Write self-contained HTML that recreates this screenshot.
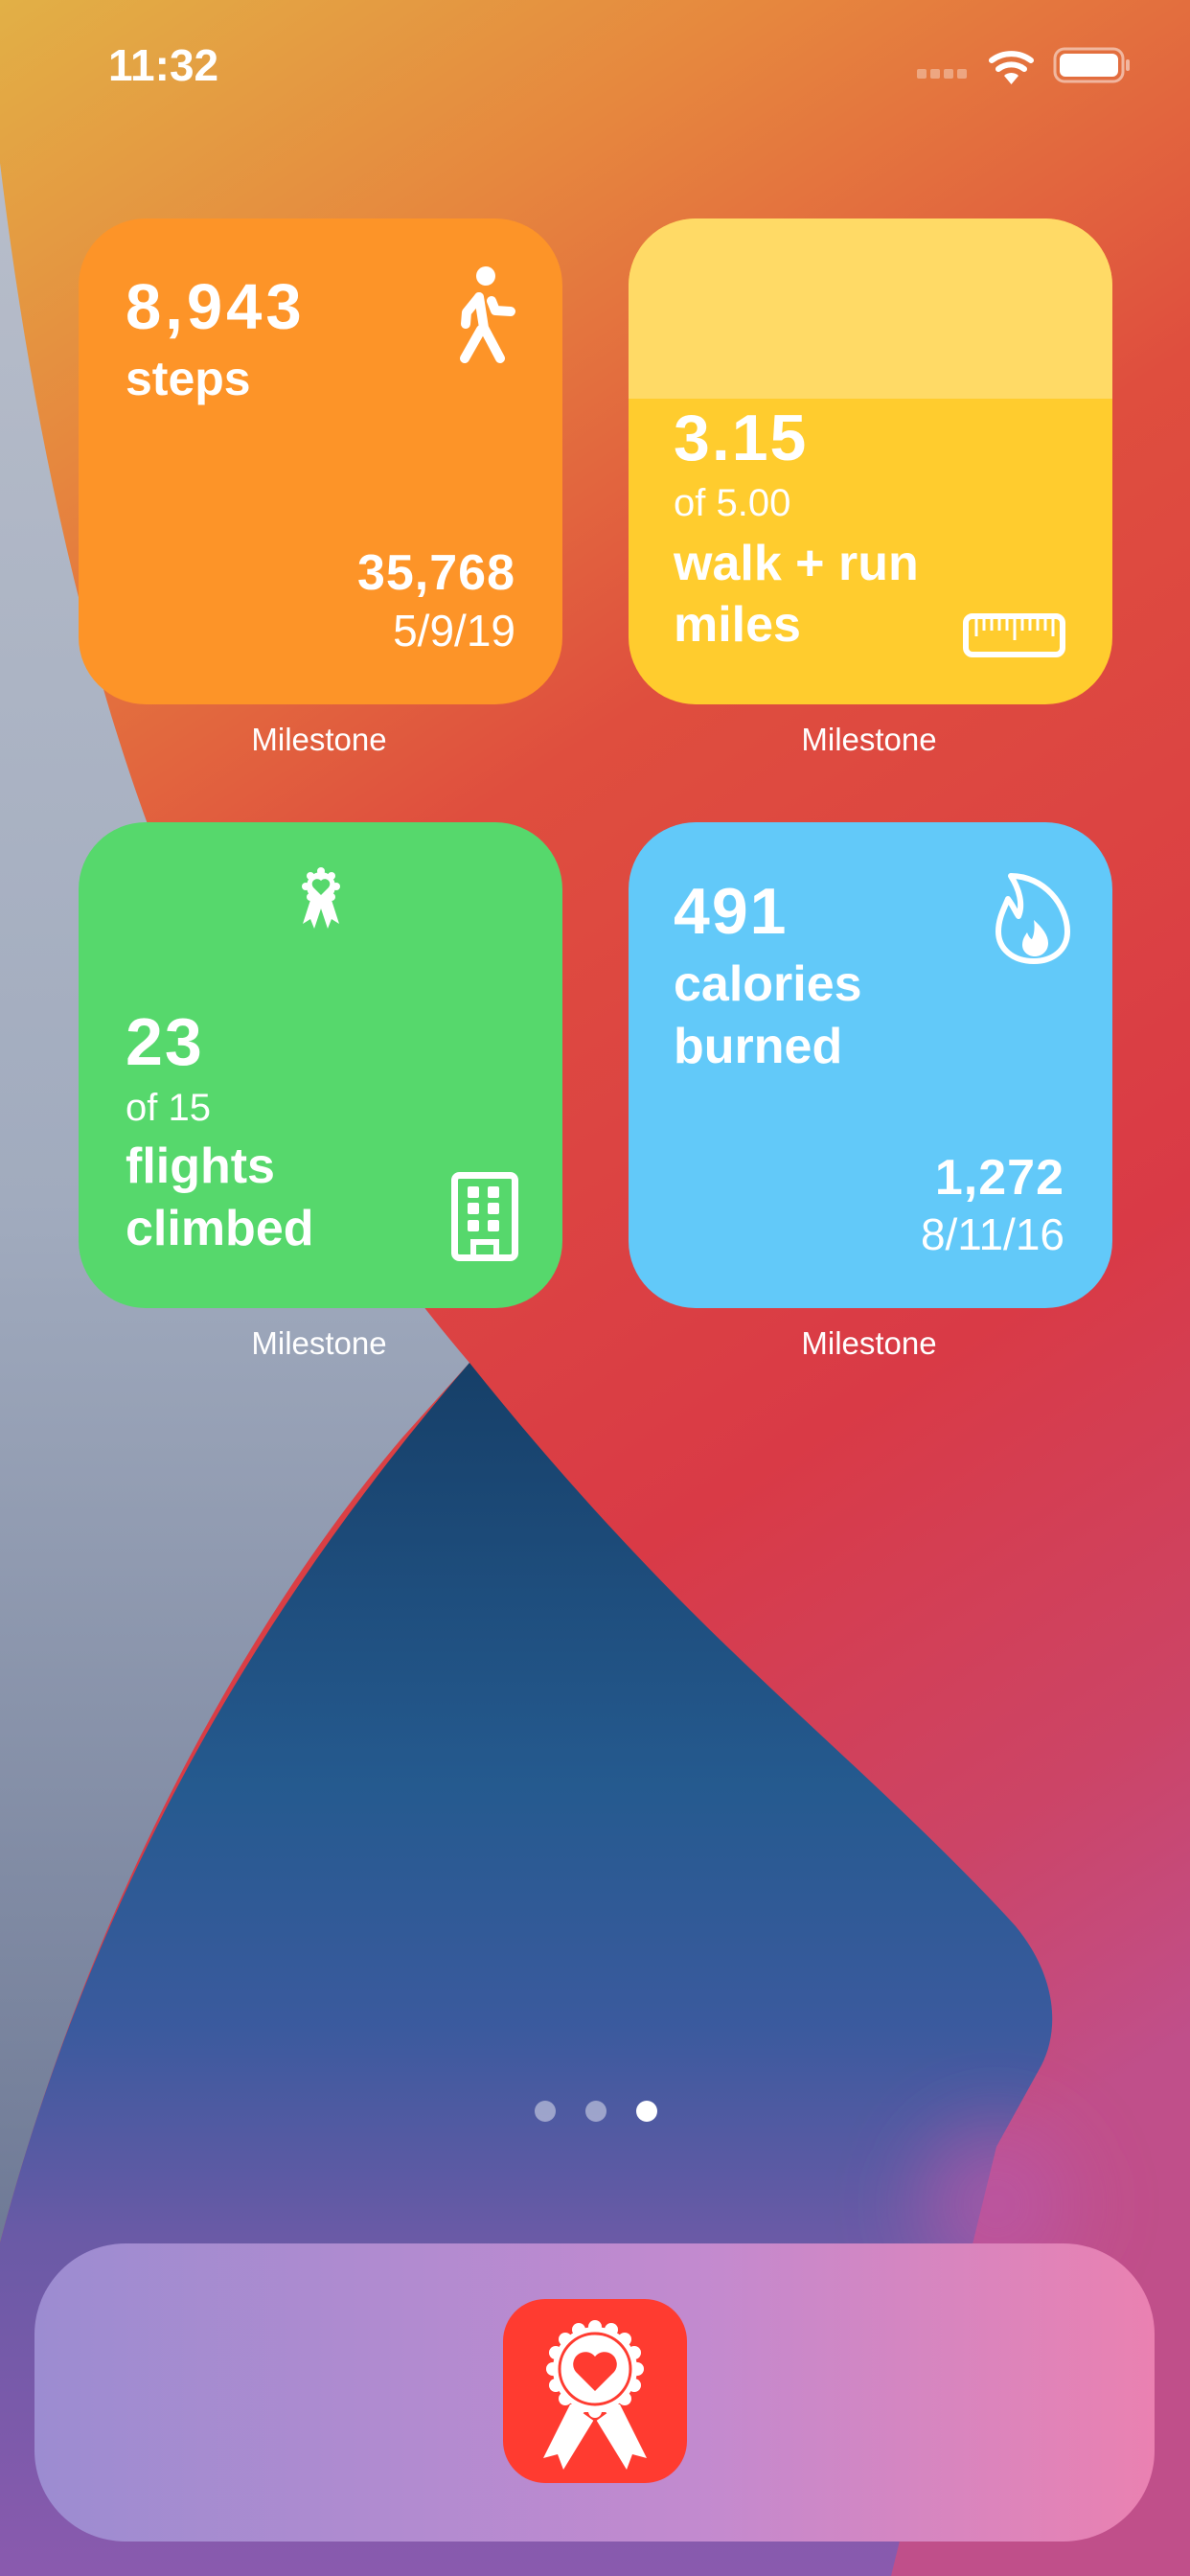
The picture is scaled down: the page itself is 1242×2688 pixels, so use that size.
<!DOCTYPE html>
<html><head><meta charset="utf-8"><style>
*{margin:0;padding:0;box-sizing:border-box}
html,body{width:1242px;height:2688px;overflow:hidden}
body{position:relative;font-family:"Liberation Sans",sans-serif;color:#fff}
.t{position:absolute;white-space:nowrap;line-height:1}
.w{position:absolute;border-radius:70px;overflow:hidden}
.b{font-weight:bold}
.r{text-align:right}
</style></head><body>
<svg width="1242" height="2688" style="position:absolute;left:0;top:0">
<defs>
<linearGradient id="bg" x1="0" y1="0" x2="0.3" y2="1">
<stop offset="0" stop-color="#E2B046"/>
<stop offset="0.18" stop-color="#E6873E"/>
<stop offset="0.4" stop-color="#DF4E3E"/>
<stop offset="0.7" stop-color="#D93A46"/>
<stop offset="0.88" stop-color="#CC4466"/>
<stop offset="1" stop-color="#C04F8A"/>
</linearGradient>
<linearGradient id="gray" x1="0" y1="0" x2="0" y2="1">
<stop offset="0" stop-color="#B7BDCA"/>
<stop offset="0.5" stop-color="#A1ABBE"/>
<stop offset="1" stop-color="#6F7A96"/>
</linearGradient>
<linearGradient id="blue" gradientUnits="userSpaceOnUse" x1="0" y1="1422" x2="0" y2="2688">
<stop offset="0" stop-color="#163F68"/>
<stop offset="0.35" stop-color="#255A8F"/>
<stop offset="0.55" stop-color="#3B5A9E"/>
<stop offset="0.72" stop-color="#6A5AA6"/>
<stop offset="1" stop-color="#8A5AAE"/>
</linearGradient>
<radialGradient id="mag" cx="0.5" cy="0.5" r="0.5">
<stop offset="0" stop-color="#B858A8" stop-opacity="0.9"/>
<stop offset="1" stop-color="#B858A8" stop-opacity="0"/>
</radialGradient>
<linearGradient id="dock" x1="0" y1="0" x2="1" y2="0">
<stop offset="0" stop-color="#9C8CD1"/>
<stop offset="0.6" stop-color="#C38ACF"/>
<stop offset="1" stop-color="#EA81B1"/>
</linearGradient>
<filter id="bl" x="-0.3" y="-0.3" width="1.6" height="1.6"><feGaussianBlur stdDeviation="30"/></filter>
</defs>
<rect width="1242" height="2688" fill="url(#bg)"/>
<path d="M0 170 C40 500 120 850 260 1090 C340 1230 420 1340 490 1422 L420 1500 C250 1700 90 2000 0 2340 Z" fill="url(#gray)"/>
<path d="M490 1422 C560 1510 640 1600 720 1680 C830 1790 960 1900 1060 2010 C1105 2065 1105 2120 1087 2155 L1040 2240 L930 2688 L0 2688 L0 2340 C90 2000 250 1700 490 1422 Z" fill="url(#blue)"/>
<ellipse cx="1040" cy="2300" rx="120" ry="120" fill="url(#mag)" filter="url(#bl)"/>
<rect x="36" y="2341" width="1169" height="311" rx="95" fill="url(#dock)"/>
<circle cx="569" cy="2203" r="11" fill="#fff" opacity="0.45"/>
<circle cx="622" cy="2203" r="11" fill="#fff" opacity="0.45"/>
<circle cx="675" cy="2203" r="11" fill="#fff"/>
</svg>

<!-- status bar -->
<div class="t b" style="left:113px;top:45px;font-size:46px">11:32</div>
<svg width="242" height="50" style="position:absolute;left:950px;top:45px">
<g fill="#fff" opacity="0.35"><rect x="7" y="27" width="10" height="10" rx="2"/><rect x="21" y="27" width="10" height="10" rx="2"/><rect x="35" y="27" width="10" height="10" rx="2"/><rect x="49" y="27" width="10" height="10" rx="2"/></g>
<g fill="none" stroke="#fff" stroke-width="6" stroke-linecap="round"><path d="M85 18 A34 34 0 0 1 126 18"/><path d="M92 27 A22 22 0 0 1 119 27"/></g>
<path d="M98 34 L105.5 43 L113 34 A11 11 0 0 0 98 34Z" fill="#fff"/>
<rect x="151" y="6" width="71" height="34" rx="10" fill="none" stroke="#fff" stroke-opacity="0.5" stroke-width="3"/>
<rect x="156" y="11" width="61" height="24" rx="6" fill="#fff"/>
<rect x="225" y="17" width="4" height="12" rx="2" fill="#fff" opacity="0.5"/>
</svg>

<!-- widget 1 orange -->
<div class="w" style="left:82px;top:228px;width:505px;height:507px;background:#FD9428"></div>
<div class="t b" style="left:131px;top:287px;font-size:67px;letter-spacing:4px">8,943</div>
<div class="t b" style="left:131px;top:370px;font-size:50px">steps</div>
<div class="t b r" style="right:704px;top:572px;font-size:52px;letter-spacing:1px">35,768</div>
<div class="t r" style="right:704px;top:635px;font-size:46px">5/9/19</div>
<svg width="80" height="120" style="position:absolute;left:465px;top:270px">
<circle cx="42" cy="18" r="10" fill="#fff"/>
<g fill="none" stroke="#fff" stroke-width="10" stroke-linecap="round" stroke-linejoin="round">
<path d="M35 40 L40 72 L57 104"/><path d="M37 74 L20 104"/><path d="M35 40 L22 56 L21 68"/><path d="M48 44 L52 54 L68 55"/></g>
</svg>
<div class="t" style="left:233px;top:755px;width:200px;text-align:center;font-size:33px">Milestone</div>

<!-- widget 2 yellow -->
<div class="w" style="left:656px;top:228px;width:505px;height:507px;background:#FFCC2E"><div style="height:188px;background:#FFDA66"></div></div>
<div class="t b" style="left:703px;top:423px;font-size:68px;letter-spacing:2px">3.15</div>
<div class="t" style="left:703px;top:505px;font-size:40px">of 5.00</div>
<div class="t b" style="left:703px;top:562px;font-size:52px">walk + run</div>
<div class="t b" style="left:703px;top:626px;font-size:52px">miles</div>
<svg width="115" height="55" style="position:absolute;left:1002px;top:636px">
<rect x="6" y="7" width="101" height="40" rx="7" fill="none" stroke="#fff" stroke-width="6"/>
<g stroke="#fff" stroke-width="3"><path d="M17 10V28M25 10V22M33 10V22M41 10V22M49 10V22M57 10V32M65 10V22M73 10V22M81 10V22M89 10V22M97 10V28"/></g>
</svg>
<div class="t" style="left:807px;top:755px;width:200px;text-align:center;font-size:33px">Milestone</div>

<!-- widget 3 green -->
<div class="w" style="left:82px;top:858px;width:505px;height:507px;background:#56D86C"></div>
<svg width="50" height="75" style="position:absolute;left:310px;top:898px">
<path d="M15 38 L6 66 L14 61 L18 71 L25 50 L32 71 L36 61 L44 66 L35 38 Z" fill="#fff"/>
<circle cx="25" cy="27" r="15" fill="#fff"/>
<g fill="#fff"><circle cx="25" cy="11" r="4"/><circle cx="36" cy="16" r="4"/><circle cx="41" cy="27" r="4"/><circle cx="36" cy="38" r="4"/><circle cx="25" cy="43" r="4"/><circle cx="14" cy="38" r="4"/><circle cx="9" cy="27" r="4"/><circle cx="14" cy="16" r="4"/></g>
<path d="M25 36 L17 28 A4.5 4.5 0 0 1 25 21 A4.5 4.5 0 0 1 33 28 Z" fill="#56D86C"/>
</svg>
<div class="t b" style="left:131px;top:1052px;font-size:70px;letter-spacing:2px">23</div>
<div class="t" style="left:131px;top:1136px;font-size:40px">of 15</div>
<div class="t b" style="left:131px;top:1191px;font-size:52px">flights</div>
<div class="t b" style="left:131px;top:1256px;font-size:52px">climbed</div>
<svg width="80" height="100" style="position:absolute;left:466px;top:1218px">
<rect x="8.5" y="8.5" width="63" height="86" rx="5" fill="none" stroke="#fff" stroke-width="7"/>
<g fill="#fff"><rect x="22" y="20" width="12" height="12" rx="2"/><rect x="43" y="20" width="12" height="12" rx="2"/><rect x="22" y="37" width="12" height="12" rx="2"/><rect x="43" y="37" width="12" height="12" rx="2"/><rect x="22" y="55" width="12" height="12" rx="2"/><rect x="43" y="55" width="12" height="12" rx="2"/></g>
<path d="M28 94 V78 H52 V94" fill="none" stroke="#fff" stroke-width="6"/>
</svg>
<div class="t" style="left:233px;top:1385px;width:200px;text-align:center;font-size:33px">Milestone</div>

<!-- widget 4 blue -->
<div class="w" style="left:656px;top:858px;width:505px;height:507px;background:#62C9F9"></div>
<div class="t b" style="left:703px;top:917px;font-size:68px;letter-spacing:2px">491</div>
<div class="t b" style="left:703px;top:1001px;font-size:52px">calories</div>
<div class="t b" style="left:703px;top:1066px;font-size:52px">burned</div>
<div class="t b r" style="right:131px;top:1203px;font-size:52px;letter-spacing:1px">1,272</div>
<div class="t r" style="right:131px;top:1265px;font-size:46px">8/11/16</div>
<svg width="90" height="110" style="position:absolute;left:1030px;top:900px">
<path d="M25 14 C60 14 84 45 84 72 C84 92 68 103 49 103 C27 103 12 90 12 72 C12 58 18 48 22 38 C28 46 30 52 33 56 C38 44 34 28 25 14 Z" fill="none" stroke="#fff" stroke-width="6" stroke-linejoin="round"/>
<path d="M49 60 C58 68 64 76 64 84 C64 93 57 98 50 98 C43 98 37 93 37 86 C37 80 40 76 42 73 C44 78 46 80 47 80 C50 74 50 66 49 60 Z" fill="#fff"/>
</svg>
<div class="t" style="left:807px;top:1385px;width:200px;text-align:center;font-size:33px">Milestone</div>

<!-- app icon -->
<svg width="192" height="192" style="position:absolute;left:525px;top:2399px">
<rect width="192" height="192" rx="44" fill="#FF3B30"/>
<path d="M70 110 L42 166 L57 162 L63 178 L96 124 L129 178 L135 162 L150 166 L122 110 Z" fill="#fff"/>
<path d="M96 128 L82 118 L110 118 Z" fill="#FF3B30"/>
<circle cx="96" cy="73" r="44" fill="#fff"/>
<g fill="#fff">
<circle cx="96" cy="29" r="7"/><circle cx="113" cy="32" r="7"/><circle cx="127" cy="42" r="7"/><circle cx="137" cy="56" r="7"/><circle cx="140" cy="73" r="7"/><circle cx="137" cy="90" r="7"/><circle cx="127" cy="104" r="7"/><circle cx="113" cy="114" r="7"/><circle cx="96" cy="117" r="7"/><circle cx="79" cy="114" r="7"/><circle cx="65" cy="104" r="7"/><circle cx="55" cy="90" r="7"/><circle cx="52" cy="73" r="7"/><circle cx="55" cy="56" r="7"/><circle cx="65" cy="42" r="7"/><circle cx="79" cy="32" r="7"/></g>
<circle cx="96" cy="73" r="37" fill="none" stroke="#FF3B30" stroke-width="3"/>
<path d="M96 96 L76 76 A11 11 0 0 1 96 60 A11 11 0 0 1 116 76 Z" fill="#FF3B30"/>
</svg>
</body></html>
